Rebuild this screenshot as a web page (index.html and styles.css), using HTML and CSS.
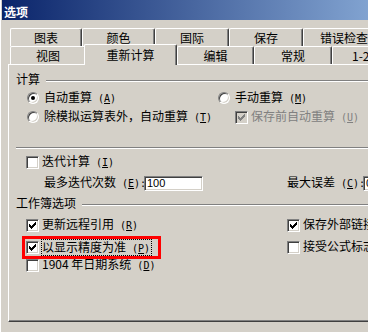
FILE: index.html
```html
<!DOCTYPE html>
<html>
<head>
<meta charset="utf-8">
<link rel="stylesheet" href="styles.css">
</head>
<body>
<div class="win">
  <div class="titlebar">选项</div>
  <div class="tabs">
    <div class="tabrow">
      <div class="tab w72">图表</div>
      <div class="tab w73">颜色</div>
      <div class="tab w74">国际</div>
      <div class="tab w74">保存</div>
      <div class="tab tab-left pad16">错误检查</div>
    </div>
    <div class="tabrow">
      <div class="tab w76">视图</div>
      <div class="tab sel">重新计算</div>
      <div class="tab w77">编辑</div>
      <div class="tab w78">常规</div>
      <div class="tab tab-left pad19">1-2-3 的帮助</div>
    </div>
  </div>
  <div class="panel">
    <div class="grp"><span>计算</span><span class="grp-line"></span></div>

    <div class="row gap3">
      <div class="cell c191">
        <span class="rb on"></span><span class="rlbl">自动重算<span class="acc"> (<u>A</u>)</span></span>
      </div>
      <div class="cell">
        <span class="rb"></span><span class="rlbl">手动重算<span class="acc"> (<u>M</u>)</span></span>
      </div>
    </div>

    <div class="row gap3">
      <div class="cell c209">
        <span class="rb"></span><span class="rlbl">除模拟运算表外，自动重算<span class="acc"> (<u>T</u>)</span></span>
      </div>
      <div class="cell">
        <span class="cb dis"><svg class="chk" width="7" height="7" viewBox="0 0 7 7"><path d="M6 0h1v1h-1zM5 1h2v1h-2zM0 2h1v1h-1zM4 2h3v1h-3zM0 3h2v1h-2zM3 3h3v1h-3zM0 4h5v1h-5zM1 5h3v1h-3zM2 6h1v1h-1z"/></svg></span><span class="lbl disabled">保存前自动重算<span class="acc"> (<u>U</u>)</span></span>
      </div>
    </div>

    <div class="sep"></div>

    <div class="row gap5">
      <span class="cb"></span><span class="lbl">迭代计算<span class="acc"> (<u>I</u>)</span></span>
    </div>

    <div class="row gap5">
      <span class="num-lbl">最多迭代次数<span class="acc"> (<u>E</u>):</span></span>
      <span class="inp w59">100</span>
      <span class="num-lbl2">最大误差<span class="acc"> (<u>C</u>):</span></span>
      <span class="inp w60">0.001</span>
    </div>

    <div class="grp gap4"><span>工作簿选项</span><span class="grp-line"></span></div>

    <div class="row gap6">
      <div class="cell c261">
        <span class="cb"><svg class="chk" width="7" height="7" viewBox="0 0 7 7"><path d="M6 0h1v1h-1zM5 1h2v1h-2zM0 2h1v1h-1zM4 2h3v1h-3zM0 3h2v1h-2zM3 3h3v1h-3zM0 4h5v1h-5zM1 5h3v1h-3zM2 6h1v1h-1z"/></svg></span><span class="lbl">更新远程引用<span class="acc"> (<u>R</u>)</span></span>
      </div>
      <div class="cell">
        <span class="cb"><svg class="chk" width="7" height="7" viewBox="0 0 7 7"><path d="M6 0h1v1h-1zM5 1h2v1h-2zM0 2h1v1h-1zM4 2h3v1h-3zM0 3h2v1h-2zM3 3h3v1h-3zM0 4h5v1h-5zM1 5h3v1h-3zM2 6h1v1h-1z"/></svg></span><span class="lbl">保存外部链接数值<span class="acc"> (<u>X</u>)</span></span>
      </div>
    </div>

    <div class="row gap6 marked">
      <div class="cell c261">
        <span class="cb"><svg class="chk" width="7" height="7" viewBox="0 0 7 7"><path d="M6 0h1v1h-1zM5 1h2v1h-2zM0 2h1v1h-1zM4 2h3v1h-3zM0 3h2v1h-2zM3 3h3v1h-3zM0 4h5v1h-5zM1 5h3v1h-3zM2 6h1v1h-1z"/></svg></span><span class="lbl focus">以显示精度为准<span class="acc"> (<u>P</u>)</span></span>
      </div>
      <div class="cell">
        <span class="cb"></span><span class="lbl">接受公式标志<span class="acc"> (<u>L</u>)</span></span>
      </div>
      <div class="redbox"></div>
    </div>

    <div class="row gap2">
      <span class="cb"></span><span class="lbl">1904 年日期系统<span class="acc"> (<u>D</u>)</span></span>
    </div>
  </div>
</div>
</body>
</html>
```

FILE: styles.css
```css
* { box-sizing: border-box; }
html, body { margin: 0; padding: 0; }
body {
  width: 368px;
  height: 332px;
  overflow: hidden;
  background: #d4d0c8;
  font-family: "Noto Sans CJK SC", sans-serif;
  font-size: 12px;
  color: #000;
}
.win {
  border-left: 1px solid #fff;
  height: 332px;
}
.titlebar {
  margin-left: 1px;
  height: 20px;
  padding: 3px 0 0 2px;
  line-height: 17px;
  color: #fff;
  font-weight: bold;
  background: linear-gradient(90deg, #0a246a 0px, #a6caf0 480px);
}
.tabs { padding-left: 9px; margin-top: 8px; }
.tabrow { display: flex; height: 18px; }
.tab {
  flex-shrink: 0;
  height: 18px;
  border-top: 1px solid #fff;
  border-left: 1px solid #fff;
  border-right: 1px solid #404040;
  border-top-left-radius: 2px;
  border-top-right-radius: 2px;
  box-shadow: inset -1px 0 #808080;
  line-height: 17px;
  text-align: center;
  white-space: nowrap;
  background: #d4d0c8;
}
.w72 { width: 72px; }
.w73 { width: 73px; }
.w74 { width: 74px; }
.w76 { width: 76px; }
.w77 { width: 77px; }
.w78 { width: 78px; }
.tab-left { text-align: left; width: 90px; }
.pad16 { padding-left: 16px; }
.pad19 { padding-left: 19px; }
.tab.sel {
  width: 93px;
  height: 21px;
  margin: -2px 0 0 -2px;
  padding-top: 1px;
  position: relative;
  z-index: 2;
}
.panel {
  margin-left: 7px;
  width: 420px;
  height: 258px;
  border-top: 1px solid #fff;
  border-left: 1px solid #fff;
  border-bottom: 1px solid #404040;
  box-shadow: inset 0 -1px #808080;
  padding: 6px 0 0 7px;
}
.grp {
  display: flex;
  align-items: center;
  height: 16px;
  line-height: 16px;
  white-space: nowrap;
}
.grp-line {
  flex: 1;
  height: 2px;
  border-top: 1px solid #808080;
  border-bottom: 1px solid #fff;
  margin-left: 6px;
  margin-top: 3px;
}
.sep {
  height: 2px;
  border-top: 1px solid #808080;
  border-bottom: 1px solid #fff;
  margin-top: 22px;
}
.row {
  display: flex;
  align-items: center;
  height: 16px;
  line-height: 16px;
  padding-left: 10px;
  white-space: nowrap;
}
.gap2 { margin-top: 2px; }
.gap3 { margin-top: 3px; }
.gap4 { margin-top: 4px; }
.gap5 { margin-top: 5px; }
.gap6 { margin-top: 6px; }
.cell { display: flex; align-items: center; flex-shrink: 0; }
.c191 { width: 191px; }
.c209 { width: 209px; }
.c261 { width: 261px; }
.cb {
  width: 13px;
  height: 13px;
  flex-shrink: 0;
  background: #fff;
  border-top: 1px solid #808080;
  border-left: 1px solid #808080;
  border-right: 1px solid #fff;
  border-bottom: 1px solid #fff;
  box-shadow: inset 1px 1px #404040, inset -1px -1px #d4d0c8;
}
.cb.dis { background: #d4d0c8; }
.cb.dis .chk { fill: #808080; }
.chk { display: block; margin: 2px 0 0 2px; fill: #000; shape-rendering: crispEdges; }
.rb {
  width: 12px;
  height: 12px;
  flex-shrink: 0;
  margin-left: 1px;
  border-radius: 50%;
  background: #fff;
  border: 1px solid;
  border-color: #808080 #fff #fff #808080;
  box-shadow: inset 1px 1px #404040, inset -1px -1px #d4d0c8;
  display: flex;
  align-items: center;
  justify-content: center;
}
.rb.on::after {
  content: "";
  width: 4px;
  height: 4px;
  border-radius: 50%;
  background: #000;
}
.lbl { margin-left: 3px; }
.rlbl { margin-left: 5px; }
.disabled { color: #808080; }
.acc {
  font-family: "DejaVu Sans Mono", monospace;
  font-size: 10px;
}
.focus {
  margin-left: 2px;
  border: 1px dotted #000;
  line-height: 13px;
  padding-right: 1px;
}
.num-lbl { margin-left: 18px; width: 100px; flex-shrink: 0; }
.num-lbl2 { margin-left: 84px; width: 76px; flex-shrink: 0; }
.inp {
  flex-shrink: 0;
  height: 15px;
  background: #fff;
  border-top: 1px solid #808080;
  border-left: 1px solid #808080;
  border-right: 1px solid #fff;
  border-bottom: 1px solid #fff;
  box-shadow: inset 1px 1px #404040, inset -1px -1px #d4d0c8;
  font-family: "Liberation Sans", sans-serif;
  font-size: 11px;
  line-height: 13px;
  padding-left: 2px;
}
.w59 { width: 59px; }
.w60 { width: 60px; }
.marked { position: relative; }
.redbox {
  position: absolute;
  left: 6px;
  top: -3px;
  width: 139px;
  height: 23px;
  border: 3px solid #f00;
}
```
